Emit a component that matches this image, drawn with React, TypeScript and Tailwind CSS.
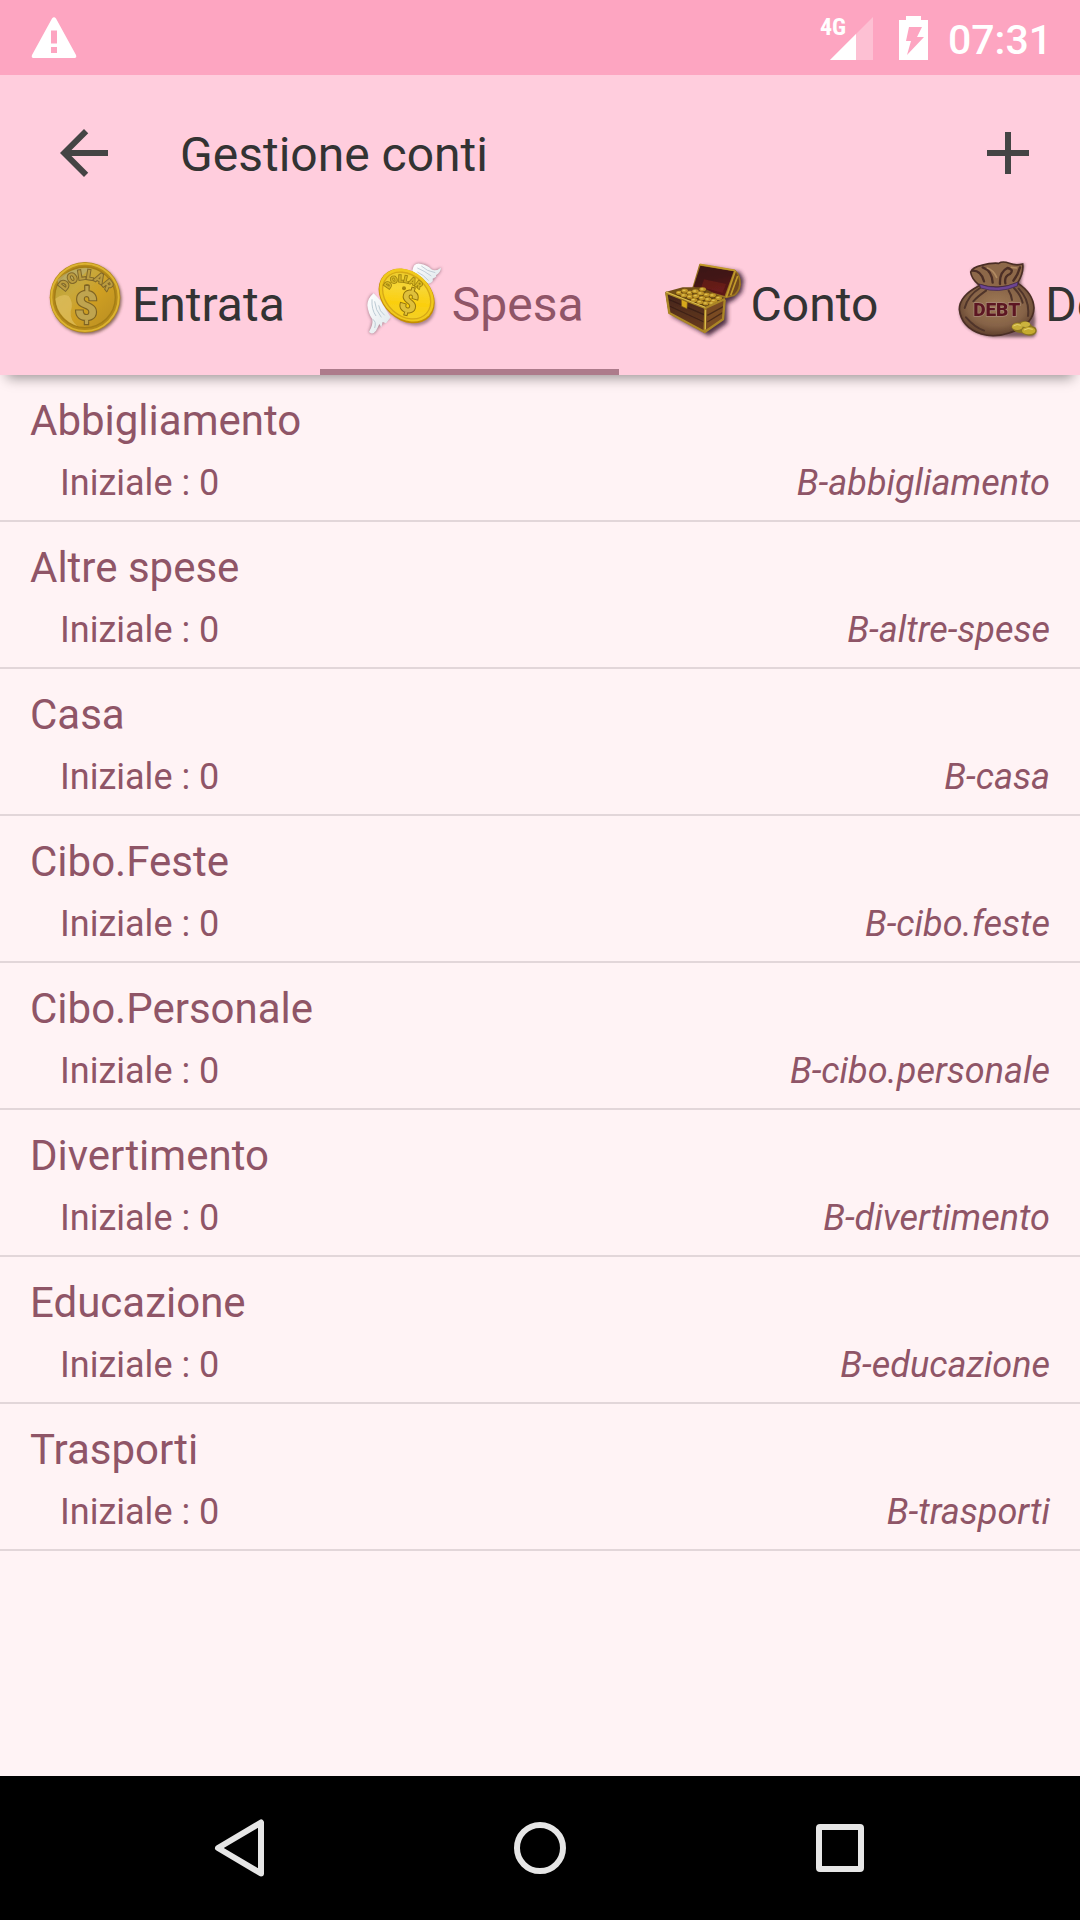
import React, { useState } from "react";

type TabInfo = { id: string; label: string; icon: React.ReactNode };

const accounts = [
  { name: "Abbigliamento", initial: 0, code: "B-abbigliamento" },
  { name: "Altre spese", initial: 0, code: "B-altre-spese" },
  { name: "Casa", initial: 0, code: "B-casa" },
  { name: "Cibo.Feste", initial: 0, code: "B-cibo.feste" },
  { name: "Cibo.Personale", initial: 0, code: "B-cibo.personale" },
  { name: "Divertimento", initial: 0, code: "B-divertimento" },
  { name: "Educazione", initial: 0, code: "B-educazione" },
  { name: "Trasporti", initial: 0, code: "B-trasporti" },
];

function CoinIcon() {
  return (
    <svg viewBox="18 45 288 288" className="size-24 shrink-0" aria-hidden="true">
      <defs>
        <linearGradient id="coinFace" x1="0.1" y1="0.1" x2="0.9" y2="0.9">
          <stop offset="0" stopColor="#b8a032" />
          <stop offset="0.3" stopColor="#c8a83c" />
          <stop offset="0.6" stopColor="#cf9f22" />
          <stop offset="1" stopColor="#bd9120" />
        </linearGradient>
        <filter id="coinSoft" x="-20%" y="-20%" width="140%" height="140%">
          <feGaussianBlur stdDeviation="4" />
        </filter>
        <filter id="coinEdge" x="-10%" y="-10%" width="120%" height="120%">
          <feGaussianBlur stdDeviation="2" />
        </filter>
        <path id="coinArc" d="M99 176 A70 70 0 0 1 237 176" />
      </defs>
      <circle cx="169" cy="177" r="106" fill="#5b3f2c" opacity="0.7" filter="url(#coinSoft)" />
      <g filter="url(#coinEdge)">
        <circle cx="165" cy="172" r="106" fill="#b4891a" />
        <circle cx="165" cy="172" r="101" fill="none" stroke="#dcb330" strokeWidth="6" />
        <circle cx="165" cy="172" r="91" fill="url(#coinFace)" stroke="#a37c18" strokeWidth="4" />
        <path d="M76 176 Q96 160 116 168 Q132 188 122 215 Q120 240 142 258 Q84 236 76 176Z" fill="#dcbc5a" opacity="0.8" />
        <path d="M82 120 Q120 80 180 84 L160 104 Q112 112 92 150Z" fill="#b9ae70" opacity="0.7" />
        <text fontFamily="Roboto, sans-serif" fontWeight="900" fontSize="40" fill="#bb9c40" stroke="#80672a" strokeWidth="6" paintOrder="stroke">
          <textPath href="#coinArc" startOffset="50%" textAnchor="middle">DOLLAR</textPath>
        </text>
        <circle cx="171" cy="140" r="8" fill="#8b732c" />
        <text x="168" y="240" textAnchor="middle" fontFamily="Roboto, sans-serif" fontWeight="900" fontSize="120" fill="#bfa450" stroke="#7f6424" strokeWidth="7" paintOrder="stroke">$</text>
      </g>
    </svg>
  );
}

function WingedCoinIcon() {
  return (
    <svg viewBox="48 45 288 288" className="size-24 shrink-0" aria-hidden="true">
      <defs>
        <linearGradient id="wingCoin" x1="0.1" y1="0.1" x2="0.9" y2="0.9">
          <stop offset="0" stopColor="#eac92a" />
          <stop offset="0.35" stopColor="#f7d634" />
          <stop offset="0.65" stopColor="#fbcf0e" />
          <stop offset="1" stopColor="#f1cf2a" />
        </linearGradient>
        <linearGradient id="wingFill" x1="0" y1="0" x2="1" y2="1">
          <stop offset="0" stopColor="#ffffff" />
          <stop offset="1" stopColor="#dde6ea" />
        </linearGradient>
        <filter id="wingSoft" x="-20%" y="-20%" width="140%" height="140%">
          <feGaussianBlur stdDeviation="4" />
        </filter>
        <filter id="wingEdge" x="-10%" y="-10%" width="120%" height="120%">
          <feGaussianBlur stdDeviation="2" />
        </filter>
        <path id="wingArc" d="M142 168 Q150 120 190 126 Q232 132 250 164" />
      </defs>
      <g fill="#765260" opacity="0.6" filter="url(#wingSoft)">
        <path d="M217 84 Q226 68 240 70 Q264 72 274 88 Q284 96 304 82 Q304 98 290 108 Q282 124 266 132 L220 108Z" />
        <path d="M98 160 Q82 174 82 196 Q84 224 96 242 Q92 262 86 276 Q96 288 108 276 Q116 258 150 236Z" />
        <ellipse cx="203" cy="174" rx="94" ry="70" transform="rotate(45 203 174)" />
      </g>
      <g filter="url(#wingEdge)">
        <path d="M217 92 Q220 68 240 71 Q262 74 274 88 Q286 96 303 83 Q302 97 288 106 Q292 112 278 116 Q282 126 266 131 L234 118Z" fill="url(#wingFill)" />
        <path d="M232 84 Q252 92 274 108 M244 78 Q260 94 286 98 M232 96 Q250 104 266 122" fill="none" stroke="#c3ced8" strokeWidth="3" />
        <path d="M101 160 Q83 174 82 196 Q85 222 97 238 Q100 254 87 276 Q98 286 108 272 Q114 262 118 252 L124 262 L128 246 L138 250 L152 232 L120 180Z" fill="url(#wingFill)" />
        <path d="M96 178 Q94 208 108 228 M104 184 Q106 210 124 232 M98 238 Q110 244 104 264 M116 196 Q118 214 134 226" fill="none" stroke="#bccbd4" strokeWidth="3" />
        <g transform="rotate(42 200 168)">
          <ellipse cx="200" cy="168" rx="93" ry="72" fill="#c58f04" />
          <ellipse cx="198" cy="166" rx="90" ry="70" fill="#f0c91f" />
          <ellipse cx="199" cy="167" rx="80" ry="61" fill="url(#wingCoin)" stroke="#d6a814" strokeWidth="4" />
        </g>
        <text fontFamily="Roboto, sans-serif" fontWeight="900" fontSize="28" fill="#d6b624" stroke="#a1840f" strokeWidth="5" paintOrder="stroke">
          <textPath href="#wingArc" startOffset="50%" textAnchor="middle">DOLLAR</textPath>
        </text>
        <circle cx="192" cy="145" r="6" fill="#a6850c" />
        <text x="207" y="216" textAnchor="middle" transform="rotate(16 207 184)" fontFamily="Roboto, sans-serif" fontWeight="900" fontSize="90" fill="#dfc03a" stroke="#94740c" strokeWidth="6" paintOrder="stroke">$</text>
      </g>
    </svg>
  );
}

function ChestIcon() {
  const coins = [
    [118, 158], [134, 152], [150, 158], [166, 154], [188, 148], [182, 160], [200, 164], [218, 166], [236, 174],
    [132, 166], [150, 170], [168, 168], [186, 174], [204, 178], [222, 182], [162, 180], [180, 186], [198, 190], [216, 190],
  ];
  return (
    <svg viewBox="45 45 288 288" className="size-24 shrink-0" aria-hidden="true">
      <defs>
        <linearGradient id="lidInside" x1="0" y1="0" x2="0.3" y2="1">
          <stop offset="0" stopColor="#3a1714" />
          <stop offset="0.55" stopColor="#431514" />
          <stop offset="1" stopColor="#5d1918" />
        </linearGradient>
        <linearGradient id="chestFront" x1="0" y1="0" x2="0" y2="1">
          <stop offset="0" stopColor="#42231b" />
          <stop offset="1" stopColor="#6b3d20" />
        </linearGradient>
        <filter id="chestSoft" x="-20%" y="-20%" width="140%" height="140%">
          <feGaussianBlur stdDeviation="6" />
        </filter>
        <filter id="chestEdge" x="-10%" y="-10%" width="120%" height="120%">
          <feGaussianBlur stdDeviation="2" />
        </filter>
      </defs>
      <path d="M92 168 L172 148 L190 78 L300 96 L312 120 L306 156 L282 180 L262 190 L262 250 L206 288 L96 228Z" fill="#30182a" opacity="0.85" filter="url(#chestSoft)" />
      <g filter="url(#chestEdge)">
        <path d="M178 72 L286 90 Q304 106 303 134 Q300 156 284 168 L258 175 L156 146Z" fill="#9a7420" />
        <path d="M181 77 L281 94 L254 168 L160 142Z" fill="url(#lidInside)" />
        <path d="M192 118 L258 132 L248 158 L184 142Z" fill="#75201c" opacity="0.6" />
        <path d="M286 94 Q299 110 297 134 Q294 152 282 163 L262 169Z" fill="#72491c" />
        <path d="M286 92 L259 172 M293 108 L272 166 M179 73 L285 91" fill="none" stroke="#c29a2b" strokeWidth="5" />
        <path d="M76 156 L128 142 L186 142 L256 176 L198 208Z" fill="#735018" />
        {coins.map(([x, y]) => (
          <g key={`${x}-${y}`}>
            <ellipse cx={x} cy={y + 3} rx="11" ry="7" fill="#5f400f" />
            <ellipse cx={x} cy={y} rx="10" ry="6" fill="#bd9226" />
            <ellipse cx={x - 2} cy={y - 1} rx="5" ry="2" fill="#e2c553" />
          </g>
        ))}
        <path d="M76 156 L196 204 L194 278 L86 220Z" fill="url(#chestFront)" />
        <path d="M196 204 L256 176 L250 238 L194 278Z" fill="#7a4b22" />
        <path d="M86 178 L192 224 M88 198 L192 246 M202 226 L250 200 M202 246 L248 218" stroke="#2e1712" strokeWidth="4" opacity="0.6" />
        <path d="M77 157 L196 204 L255 177 M79 160 L88 219 L194 276 L249 238 L254 180 M196 206 L194 274" fill="none" stroke="#ab8626" strokeWidth="7" strokeLinejoin="round" />
        <path d="M78 156 L196 202 M197 210 L196 268" stroke="#dcc050" strokeWidth="3" />
        <path d="M124 178 L142 186 L141 206 L125 199Z" fill="#d7a91e" stroke="#7e5b17" strokeWidth="2" />
      </g>
    </svg>
  );
}

function DebtIcon() {
  return (
    <svg viewBox="93 45 288 288" className="size-24 shrink-0" aria-hidden="true">
      <defs>
        <radialGradient id="bagFill" cx="0.5" cy="0.42" r="0.6">
          <stop offset="0" stopColor="#a07a56" />
          <stop offset="0.65" stopColor="#866347" />
          <stop offset="1" stopColor="#5c3d2b" />
        </radialGradient>
        <filter id="bagSoft" x="-20%" y="-20%" width="140%" height="140%">
          <feGaussianBlur stdDeviation="4" />
        </filter>
        <filter id="bagEdge" x="-10%" y="-10%" width="120%" height="120%">
          <feGaussianBlur stdDeviation="2" />
        </filter>
      </defs>
      <path d="M180 140 Q122 176 126 222 Q136 278 224 292 L346 292 Q362 280 350 262 Q362 200 308 130 L320 72 L160 88Z" fill="#3a2226" opacity="0.65" filter="url(#bagSoft)" />
      <g filter="url(#bagEdge)">
        <path d="M182 138 Q124 168 124 208 Q130 262 190 282 Q230 294 276 278 Q346 256 348 204 Q346 160 300 130Z" fill="url(#bagFill)" stroke="#4b2e25" strokeWidth="5" />
        <path d="M186 144 Q150 166 140 204 M204 152 Q176 172 166 184 M288 144 Q308 164 314 188 M302 146 Q336 180 330 228 M144 232 Q170 262 198 272 M272 152 Q280 164 282 180" fill="none" stroke="#50342a" strokeWidth="6" strokeLinecap="round" />
        <path d="M182 134 Q160 116 158 96 Q164 82 190 76 Q220 68 242 70 Q254 62 274 70 Q294 78 314 72 Q318 98 298 130 Q240 152 182 134Z" fill="#8d6748" stroke="#4b2e25" strokeWidth="5" />
        <path d="M164 92 Q190 92 198 124 M194 82 Q222 92 224 128 M246 132 Q244 96 268 84 Q290 88 276 102 Q258 108 262 130 M306 82 Q300 104 286 122" fill="none" stroke="#4b2e25" strokeWidth="7" strokeLinecap="round" />
        <path d="M208 84 Q226 90 236 112 M280 82 L296 84" fill="none" stroke="#b08a62" strokeWidth="5" strokeLinecap="round" />
        <path d="M184 132 Q238 154 300 126 L298 138 Q242 162 188 144Z" fill="#6d4592" stroke="#3e2448" strokeWidth="2" />
        <text x="236" y="228" textAnchor="middle" fontFamily="Roboto, sans-serif" fontWeight="900" fontSize="57" fill="#5c1820" stroke="#a98a78" strokeWidth="4" paintOrder="stroke">DEBT</text>
        <path d="M280 262 Q284 246 304 248 Q318 238 334 248 Q340 258 352 262 Q362 276 348 284 Q330 292 312 280 Q286 278 280 262Z" fill="#8b7421" />
        <ellipse cx="298" cy="260" rx="16" ry="10" fill="#c7ad38" />
        <ellipse cx="322" cy="253" rx="14" ry="8" fill="#cbb33e" />
        <ellipse cx="332" cy="272" rx="20" ry="11" fill="#c6ab2f" />
        <path d="M286 258 Q298 250 308 256 M318 270 Q330 262 344 268" fill="none" stroke="#e5d170" strokeWidth="3" />
      </g>
    </svg>
  );
}

const tabs: TabInfo[] = [
  { id: "entrata", label: "Entrata", icon: <CoinIcon /> },
  { id: "spesa", label: "Spesa", icon: <WingedCoinIcon /> },
  { id: "conto", label: "Conto", icon: <ChestIcon /> },
  { id: "debito", label: "Debito", icon: <DebtIcon /> },
];

function StatusBar() {
  return (
    <div className="flex h-[75px] items-center justify-between bg-[#fda5c1] pr-7 pl-[30px] text-white">
      <svg viewBox="0 0 48 48" className="size-12" role="img" aria-label="Avviso">
        <path
          fill="currentColor"
          fillRule="evenodd"
          d="M22 4.500Q24 2 26 4.500L46 41Q47 44 44.500 44H3.500Q1 44 2 41ZM21 16.500V29.500H27V16.500ZM21 33V39H27V33Z"
        />
      </svg>
      <div className="flex items-center">
        <div className="relative mr-6 h-[45px] w-[54px]">
          <svg viewBox="0 0 54 45" className="h-full w-full" role="img" aria-label="Segnale">
            <path d="M53 2V45H10Z" fill="#fff" opacity="0.3" />
            <path d="M36 19V45H10Z" fill="#fff" />
          </svg>
          <span className="absolute top-0 left-0 font-['Roboto_Condensed','Liberation_Sans_Narrow',Roboto,sans-serif] text-2xl leading-6 font-bold">
            4G
          </span>
        </div>
        <svg viewBox="0 0 30 45" className="mr-5 h-[45px] w-[30px]" role="img" aria-label="Batteria in carica">
          <path
            fill="currentColor"
            fillRule="evenodd"
            d="M8 1H23V5H30V45H1V5H8ZM11 12L8 26H13L9 40L26 22H19L24 12Z"
          />
        </svg>
        <time className="pt-1 text-[41px] leading-[48px] font-medium">07:31</time>
      </div>
    </div>
  );
}

function NavigationBar() {
  return (
    <nav className="flex h-36 bg-black px-[90px] text-[#e6e6e6]" aria-label="Sistema">
      <button className="flex flex-1 items-center justify-center" aria-label="Indietro">
        <svg viewBox="0 0 72 72" className="size-[72px]" fill="none" stroke="currentColor" strokeWidth="6" strokeLinejoin="round">
          <path d="M57 10.500V61.500L14 36Z" />
        </svg>
      </button>
      <button className="flex flex-1 items-center justify-center" aria-label="Home">
        <svg viewBox="0 0 72 72" className="size-[72px]" fill="none" stroke="currentColor" strokeWidth="6">
          <circle cx="36" cy="36" r="23" />
        </svg>
      </button>
      <button className="flex flex-1 items-center justify-center" aria-label="Recenti">
        <svg viewBox="0 0 72 72" className="size-[72px]" fill="none" stroke="currentColor" strokeWidth="6">
          <rect x="15" y="15" width="42" height="42" rx="1" strokeLinejoin="round" />
        </svg>
      </button>
    </nav>
  );
}

export default function App() {
  const [active, setActive] = useState("spesa");

  return (
    <div className="flex min-h-screen flex-col overflow-x-hidden bg-[#fff3f5] font-[Roboto,sans-serif] text-[#8f5567]">
      <StatusBar />
      <header className="relative z-10 bg-[#ffcddd] text-[#333] shadow-[0_10px_12px_-7px_rgba(0,0,0,0.4)]">
        <div className="flex h-[156px] items-center pr-9 pl-12">
          <button aria-label="Torna indietro" className="text-[#444]">
            <svg viewBox="0 0 24 24" className="size-[72px]" fill="currentColor">
              <path d="M20 11H7.830l5.590-5.590L12 4l-8 8 8 8 1.410-1.410L7.830 13H20v-2z" />
            </svg>
          </button>
          <h1 className="ml-[60px] flex-1 pt-1 text-5xl leading-[56px]">Gestione conti</h1>
          <button aria-label="Aggiungi conto" className="text-[#444]">
            <svg viewBox="0 0 24 24" className="size-[72px]" fill="currentColor">
              <path d="M19 13h-6v6h-2v-6H5v-2h6V5h2v6h6v2z" />
            </svg>
          </button>
        </div>
        <div role="tablist" className="flex h-36 overflow-hidden">
          {tabs.map((tab) => (
            <button
              key={tab.id}
              role="tab"
              aria-selected={tab.id === active}
              onClick={() => setActive(tab.id)}
              className={
                tab.id === active
                  ? "flex shrink-0 items-center border-b-6 border-[#ad7b8b] pt-1.5 pr-[35px] pl-9 text-[#8f5567]"
                  : "flex shrink-0 items-center border-b-6 border-transparent pt-1.5 pr-[35px] pl-9"
              }
            >
              {tab.icon}
              <span className="pt-1 text-5xl leading-[56px]">{tab.label}</span>
            </button>
          ))}
        </div>
      </header>
      <main className="flex-1">
        <ul>
          {accounts.map((account) => (
            <li key={account.code} className="border-b-2 border-[#e2d6d9] px-[30px] pt-[18px] pb-[13px]">
              <h2 className="text-[42px] leading-[56px]">{account.name}</h2>
              <div className="mt-2.5 flex justify-between pl-[30px] text-4xl leading-[48px]">
                <span>Iniziale : {account.initial}</span>
                <em>{account.code}</em>
              </div>
            </li>
          ))}
        </ul>
      </main>
      <NavigationBar />
    </div>
  );
}
